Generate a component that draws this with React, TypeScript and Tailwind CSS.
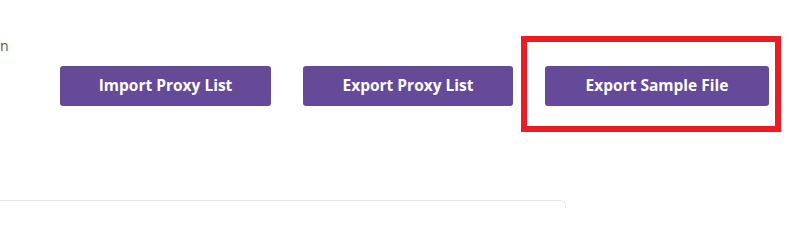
const buttons = [
  { label: "Import Proxy List", width: "w-[211px]" },
  { label: "Export Proxy List", width: "w-[210px]" },
  { label: "Export Sample File", width: "w-[224px]" },
]

export default function App() {
  return (
    <div className="relative h-[208px] w-[787px] overflow-hidden bg-white font-['Open_Sans',sans-serif]">
      {/* cut-off label from the panel on the left */}
      <div className="pt-[36px] pl-0 text-[14px] leading-[20px] text-[#555]">n</div>

      <div className="mt-[10px] flex gap-[32px] pl-[60px]">
        {buttons.map((b) => (
          <button
            key={b.label}
            className={`${b.width} h-[40px] rounded-[3px] bg-[#654a99] text-[15.5px] font-bold text-white`}
          >
            {b.label}
          </button>
        ))}
      </div>

      {/* highlight annotation */}
      <div className="pointer-events-none absolute left-[521px] top-[36px] h-[96px] w-[260px] border-[6px] border-[#ec1c24]" />

      {/* top edge of the table card below */}
      <div className="mt-[94px] h-[20px] w-[566px] rounded-tr-[6px] border-t border-r border-[#e8e8e8]" />
    </div>
  )
}
